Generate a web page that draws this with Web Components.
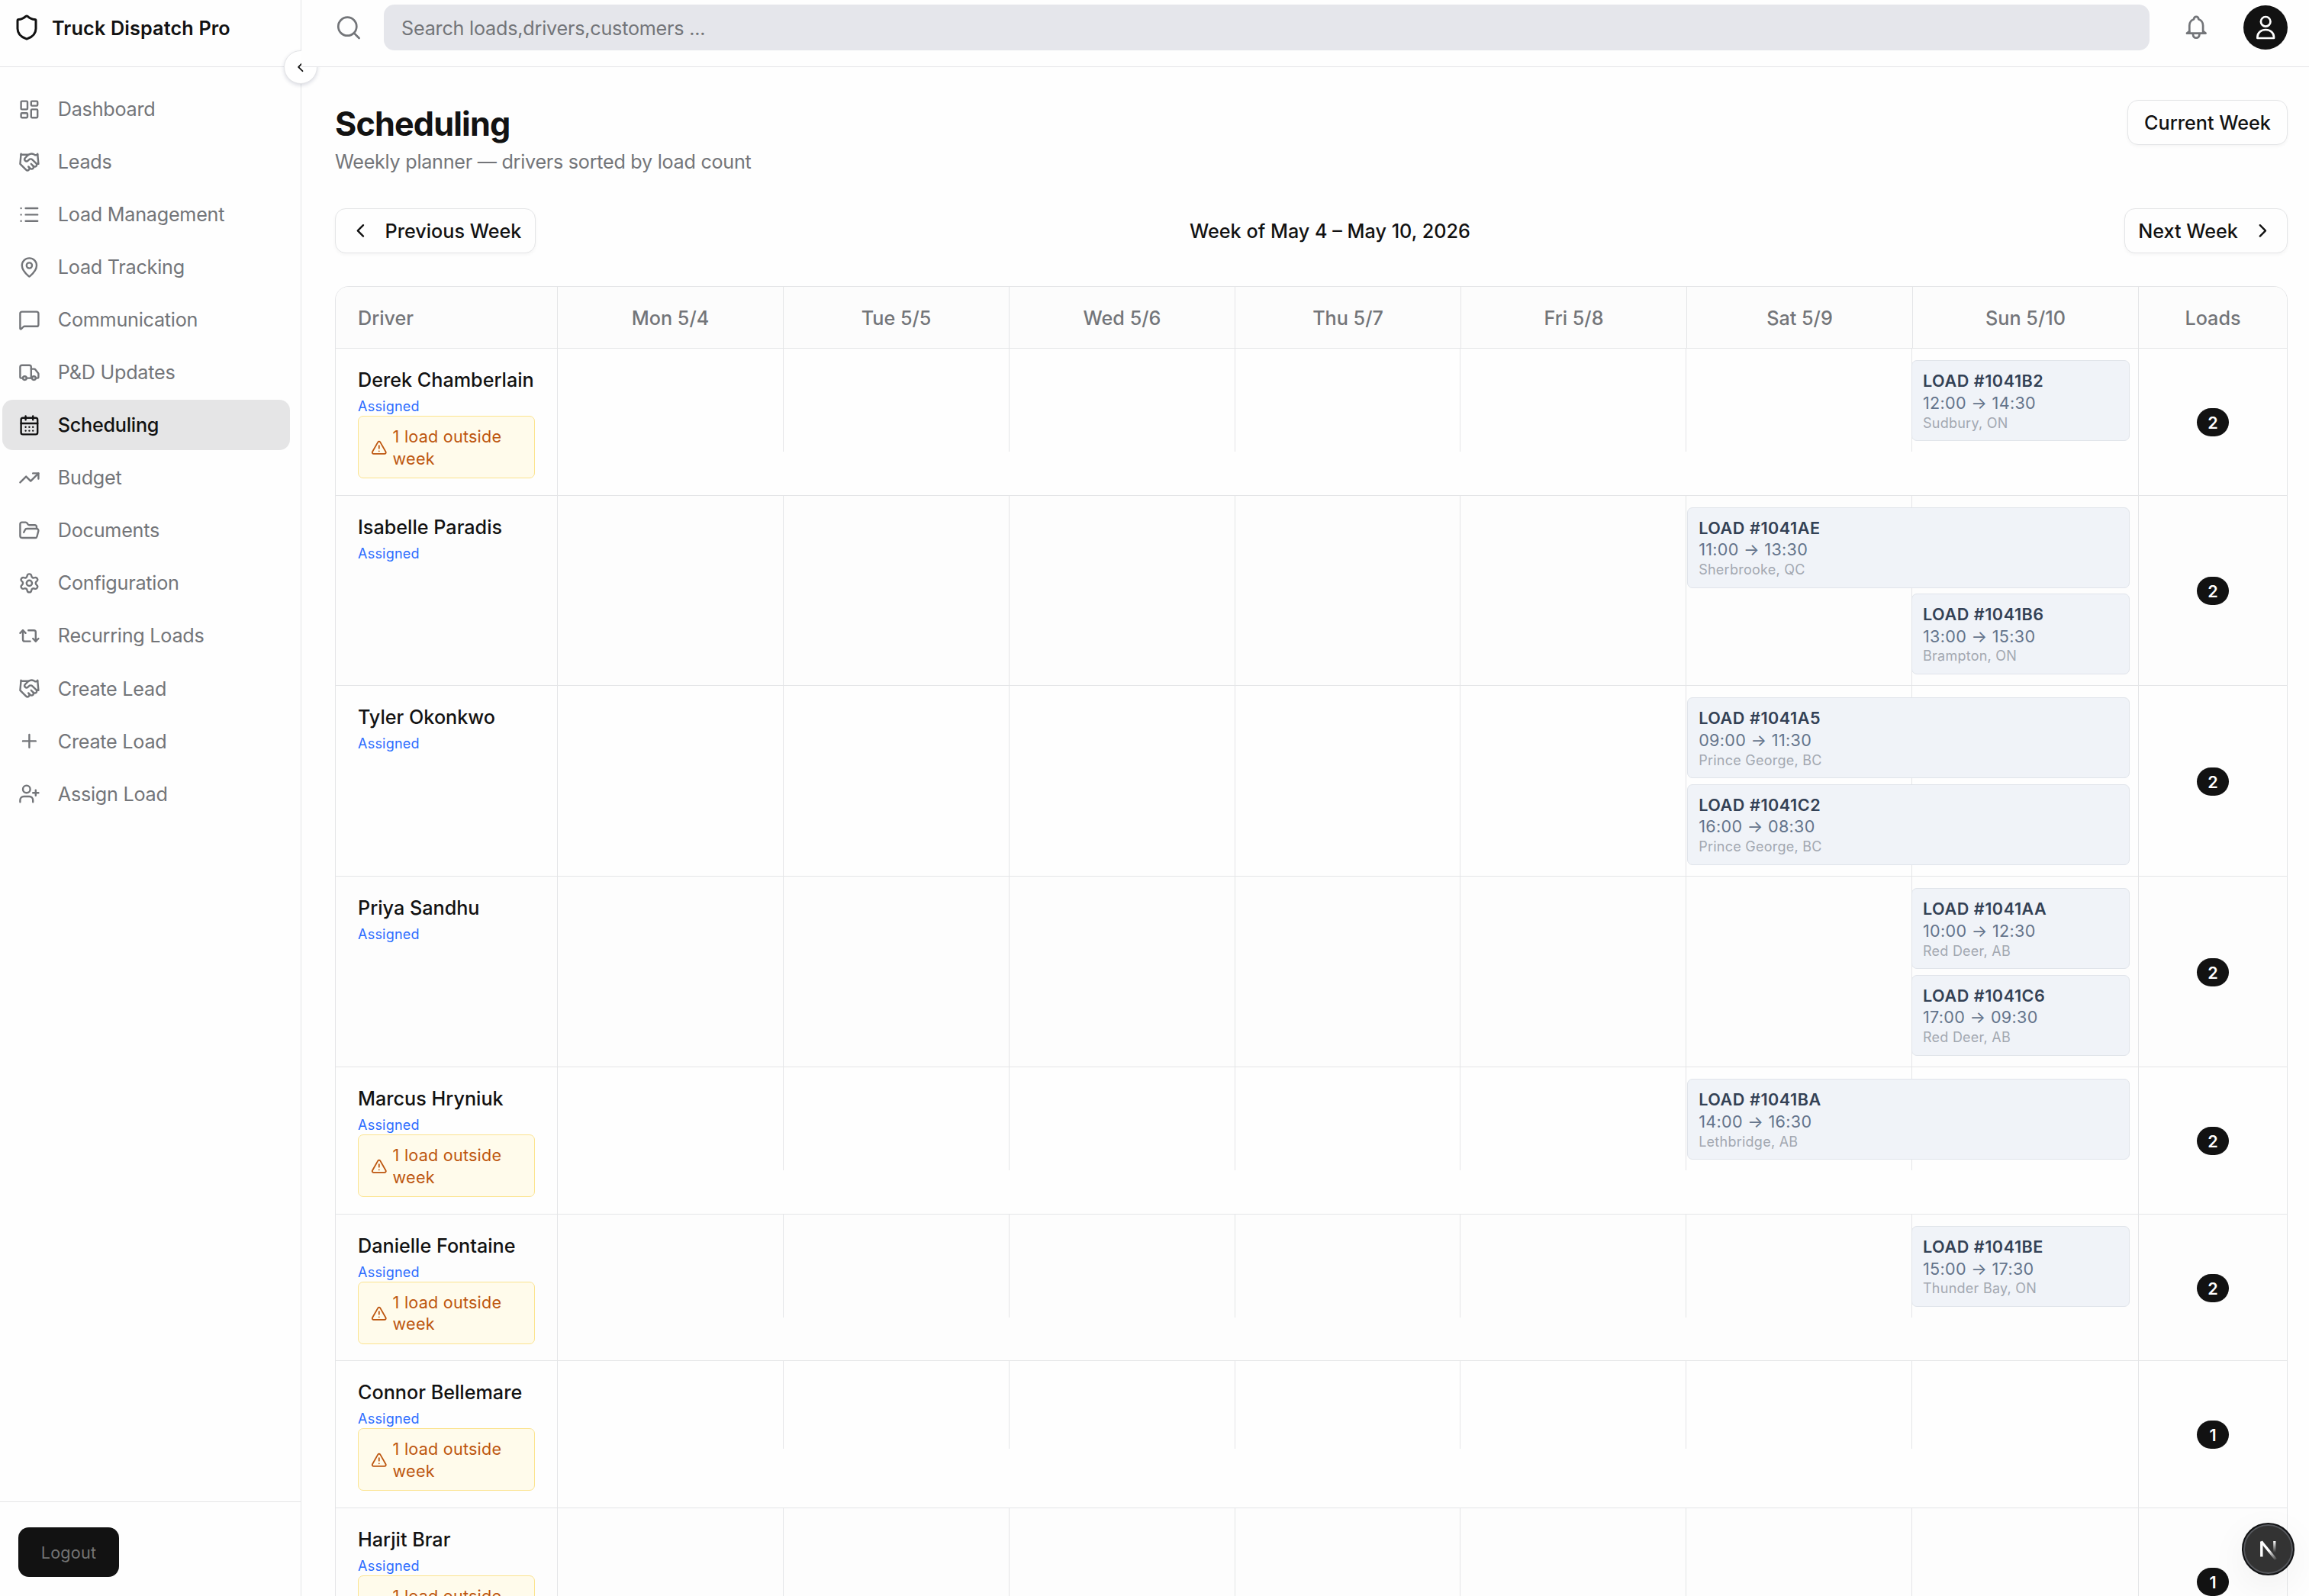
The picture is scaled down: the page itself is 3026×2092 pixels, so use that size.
<!DOCTYPE html>
<html lang="en">
<head>
<meta charset="utf-8">
<title>Truck Dispatch Pro</title>
<style>
  :root {
    --background: #fefefe;
    --foreground: #121212;
    --muted: #737579;
    --border: #e4e5e7;
    --accent: #e5e5e6;
  }

  body {
    margin: 0;
    width: 3026px;
    height: 2092px;
    overflow: hidden;
    background: var(--background);
    color: var(--foreground);
    font-family: Inter, "Liberation Sans", sans-serif;
    font-size: 25.2px;
    line-height: 36px;
  }
</style>
</head>
<body>
<dispatch-app></dispatch-app>

<script>
const ICONS = {
  shield: '<path d="M20 13c0 5-3.5 7.5-7.66 8.95a1 1 0 0 1-.67-.01C7.5 20.5 4 18 4 13V6a1 1 0 0 1 1-1c2 0 4.5-1.2 6.24-2.72a1.17 1.17 0 0 1 1.52 0C14.51 3.81 17 5 19 5a1 1 0 0 1 1 1z"/>',
  dashboard: '<rect width="7" height="9" x="3" y="3" rx="1"/><rect width="7" height="5" x="14" y="3" rx="1"/><rect width="7" height="9" x="14" y="12" rx="1"/><rect width="7" height="5" x="3" y="16" rx="1"/>',
  handshake: '<path d="m11 17 2 2a1 1 0 1 0 3-3"/><path d="m14 14 2.5 2.5a1 1 0 1 0 3-3l-3.88-3.88a3 3 0 0 0-4.24 0l-.88.88a1 1 0 1 1-3-3l2.81-2.81a5.79 5.79 0 0 1 7.06-.87l.47.28a2 2 0 0 0 1.42.25L21 4"/><path d="m21 3 1 11h-2"/><path d="M3 3 2 14l6.5 6.5a1 1 0 1 0 3-3"/><path d="M3 4h8"/>',
  list: '<path d="M3 5h.01M3 12h.01M3 19h.01M8 5h13M8 12h13M8 19h13"/>',
  pin: '<path d="M20 10c0 4.993-5.539 10.193-7.399 11.799a1 1 0 0 1-1.202 0C9.539 20.193 4 14.993 4 10a8 8 0 0 1 16 0"/><circle cx="12" cy="10" r="3"/>',
  message: '<path d="M22 17a2 2 0 0 1-2 2H6.828a2 2 0 0 0-1.414.586l-2.202 2.202A.71.71 0 0 1 2 21.286V5a2 2 0 0 1 2-2h16a2 2 0 0 1 2 2z"/>',
  truck: '<path d="M14 18V6a2 2 0 0 0-2-2H4a2 2 0 0 0-2 2v11a1 1 0 0 0 1 1h2"/><path d="M15 18H9"/><path d="M19 18h2a1 1 0 0 0 1-1v-3.65a1 1 0 0 0-.22-.624l-3.48-4.35A1 1 0 0 0 17.52 8H14"/><circle cx="17" cy="18" r="2"/><circle cx="7" cy="18" r="2"/>',
  calendar: '<path d="M8 2v4M16 2v4"/><rect width="18" height="18" x="3" y="4" rx="2"/><path d="M3 10h18M8 14h.01M12 14h.01M16 14h.01M8 18h.01M12 18h.01M16 18h.01"/>',
  trend: '<path d="M16 7h6v6"/><path d="m22 7-8.5 8.5-5-5L2 17"/>',
  folder: '<path d="m6 14 1.5-2.9A2 2 0 0 1 9.24 10H20a2 2 0 0 1 1.94 2.5l-1.54 6a2 2 0 0 1-1.95 1.5H4a2 2 0 0 1-2-2V5a2 2 0 0 1 2-2h3.9a2 2 0 0 1 1.69.9l.81 1.2a2 2 0 0 0 1.67.9H18a2 2 0 0 1 2 2v2"/>',
  settings: '<path d="M9.671 4.136a2.34 2.34 0 0 1 4.659 0 2.34 2.34 0 0 0 3.319 1.915 2.34 2.34 0 0 1 2.33 4.033 2.34 2.34 0 0 0 0 3.831 2.34 2.34 0 0 1-2.33 4.033 2.34 2.34 0 0 0-3.319 1.915 2.34 2.34 0 0 1-4.659 0 2.34 2.34 0 0 0-3.32-1.915 2.34 2.34 0 0 1-2.33-4.033 2.34 2.34 0 0 0 0-3.831A2.34 2.34 0 0 1 6.35 6.051a2.34 2.34 0 0 0 3.319-1.915"/><circle cx="12" cy="12" r="3"/>',
  repeat: '<path d="m2 9 3-3 3 3"/><path d="M13 18H7a2 2 0 0 1-2-2V6"/><path d="m22 15-3 3-3-3"/><path d="M11 6h6a2 2 0 0 1 2 2v10"/>',
  plus: '<path d="M5 12h14M12 5v14"/>',
  userplus: '<path d="M16 21v-2a4 4 0 0 0-4-4H6a4 4 0 0 0-4 4v2"/><circle cx="9" cy="7" r="4"/><path d="M19 8v6M22 11h-6"/>',
  left: '<path d="m15 18-6-6 6-6"/>',
  right: '<path d="m9 18 6-6-6-6"/>',
  warning: '<path d="m21.73 18-8-14a2 2 0 0 0-3.48 0l-8 14A2 2 0 0 0 4 21h16a2 2 0 0 0 1.73-3"/><path d="M12 9v4M12 17h.01"/>'
};

// Top bar icons are drawn on a 36 unit grid
const BAR_ICONS = {
  search: '<circle cx="16.3" cy="16.7" r="12"/><path d="m25 25.4 6.6 6.6"/>',
  bell: '<path d="M9.3 25V15.6c0-4.3 2.2-7.3 5.8-8.4.2-2.3 1.3-3.3 3.1-3.3s2.9 1 3.1 3.3c3.6 1.1 5.8 4.1 5.8 8.4V25"/><path d="M6 25.6h24.6l-3.2-2.4M6 25.6l3.2-2.4"/><path d="M13.9 26.8c.3 3.2 1.9 4.9 4.3 4.9s4-1.7 4.3-4.9"/>',
  user: '<circle cx="18.2" cy="10.3" r="6.3"/><path d="M7.4 32v-1.4C7.4 25 12 21 18.2 21S29 25 29 30.6V32z"/>'
};

class AppIcon extends HTMLElement {
  connectedCallback() {
    const name = this.getAttribute('name');
    const size = this.getAttribute('size') || 28.8;
    const bar = name in BAR_ICONS;
    this.attachShadow({ mode: 'open' }).innerHTML = `
      <style>
        :host { display: block; flex: none; width: ${size}px; height: ${size}px; }
        svg { display: block; fill: none; stroke: currentColor; stroke-linecap: round; stroke-linejoin: round; }
      </style>
      <svg width="${size}" height="${size}" viewBox="0 0 ${bar ? '36 36' : '24 24'}" stroke-width="${bar ? 2.7 : 2}">${bar ? BAR_ICONS[name] : ICONS[name]}</svg>
    `;
  }
}

class NavItem extends HTMLElement {
  connectedCallback() {
    this.attachShadow({ mode: 'open' }).innerHTML = `
      <style>
        :host {
          display: flex;
          align-items: center;
          box-sizing: border-box;
          height: 66px;
          padding-left: 21px;
          gap: 23px;
          border-radius: 14px;
          color: var(--muted);
          letter-spacing: -0.01em;
        }
        :host([active]) {
          background: var(--accent);
          color: var(--foreground);
          font-weight: 500;
        }
      </style>
      <app-icon name="${this.getAttribute('icon')}"></app-icon>
      <span><slot></slot></span>
    `;
  }
}

class SideNav extends HTMLElement {
  connectedCallback() {
    const items = [
      ['dashboard', 'Dashboard'],
      ['handshake', 'Leads'],
      ['list', 'Load Management'],
      ['pin', 'Load Tracking'],
      ['message', 'Communication'],
      ['truck', 'P&amp;D Updates'],
      ['calendar', 'Scheduling'],
      ['trend', 'Budget'],
      ['folder', 'Documents'],
      ['settings', 'Configuration'],
      ['repeat', 'Recurring Loads'],
      ['handshake', 'Create Lead'],
      ['plus', 'Create Load'],
      ['userplus', 'Assign Load']
    ];
    this.attachShadow({ mode: 'open' }).innerHTML = `
      <style>
        :host {
          display: flex;
          flex-direction: column;
          flex: none;
          position: relative;
          box-sizing: border-box;
          width: 395px;
          height: 2092px;
          border-right: 1px solid var(--border);
        }
        .brand {
          display: flex;
          align-items: center;
          box-sizing: border-box;
          height: 88px;
          padding: 0 0 15px 17px;
          gap: 15px;
          border-bottom: 1px solid var(--border);
          font-weight: 600;
          letter-spacing: 0.006em;
        }
        .brand span { padding-top: 1px; }
        nav {
          flex: 1;
          display: flex;
          flex-direction: column;
          gap: 3.06px;
          padding: 22px 14px 0 3px;
        }
        footer {
          box-sizing: border-box;
          height: 124px;
          padding: 33px 24px;
          border-top: 1px solid var(--border);
        }
        .logout {
          width: 132px;
          height: 65px;
          border: 0;
          border-radius: 14px;
          background: var(--foreground);
          color: #747474;
          font: inherit;
          font-size: 21.6px;
          letter-spacing: 0.01em;
        }
        /* Collapse handle sits on the sidebar edge */
        .collapse {
          position: absolute;
          top: 66px;
          right: -22px;
          display: grid;
          place-items: center;
          box-sizing: border-box;
          width: 44px;
          height: 44px;
          border: 1px solid var(--border);
          border-radius: 50%;
          background: #fff;
          box-shadow: 0 2px 5px rgb(30 40 80 / 0.16);
        }
      </style>
      <div class="brand"><app-icon name="shield" size="36"></app-icon><span>Truck Dispatch Pro</span></div>
      <nav>${items.map(([icon, label]) => `<nav-item icon="${icon}" ${label === 'Scheduling' ? 'active' : ''}>${label}</nav-item>`).join('')}</nav>
      <footer><button class="logout">Logout</button></footer>
      <div class="collapse"><app-icon name="left" size="21.6"></app-icon></div>
    `;
  }
}

class TopBar extends HTMLElement {
  connectedCallback() {
    this.attachShadow({ mode: 'open' }).innerHTML = `
      <style>
        :host {
          display: flex;
          align-items: center;
          position: relative;
          z-index: 1;
          box-sizing: border-box;
          height: 88px;
          padding: 0 28px 15px 44px;
          border-bottom: 1px solid var(--border);
          background: var(--background);
          color: var(--muted);
        }
        .search {
          flex: 1;
          box-sizing: border-box;
          height: 60px;
          margin: 0 43px 0 28px;
          padding: 13px 23px 0;
          border-radius: 14px;
          background: #e5e6eb;
          letter-spacing: -0.009em;
        }
        .avatar {
          display: grid;
          place-items: center;
          width: 58px;
          height: 58px;
          margin-left: 44px;
          border-radius: 50%;
          background: var(--foreground);
          color: #fff;
        }
      </style>
      <app-icon name="search" size="36"></app-icon>
      <div class="search">Search loads,drivers,customers ...</div>
      <app-icon name="bell" size="36"></app-icon>
      <div class="avatar"><app-icon name="user" size="36"></app-icon></div>
    `;
  }
}

class OutlineButton extends HTMLElement {
  connectedCallback() {
    this.attachShadow({ mode: 'open' }).innerHTML = `
      <style>
        :host {
          display: flex;
          align-items: center;
          justify-content: center;
          gap: 18px;
          box-sizing: border-box;
          height: 59px;
          padding: 0 18px;
          border: 1px solid var(--border);
          border-radius: 14px;
          background: #fefefe;
          font-weight: 500;
          white-space: nowrap;
          box-shadow: 0 2px 4px rgb(0 0 0 / 0.04);
        }
      </style>
      <slot></slot>
    `;
  }
}

class LoadCard extends HTMLElement {
  connectedCallback() {
    const start = this.getAttribute('day') === 'sat' ? 6 : 7;
    this.attachShadow({ mode: 'open' }).innerHTML = `
      <style>
        :host {
          display: block;
          box-sizing: border-box;
          grid-column: ${start} / 8;
          height: 106px;
          padding: 12px 14.4px 0;
          border: 1px solid #e0e4ea;
          border-radius: 7px;
          background: #f0f3f8;
          font-size: 21.6px;
          line-height: 28.8px;
        }
        .number { color: #334155; font-weight: 600; letter-spacing: 0.025em; }
        .time { color: #64748b; letter-spacing: 0.014em; }
        .city { color: #a3a8b1; font-size: 18px; line-height: 24.5px; letter-spacing: 0.014em; }
      </style>
      <div class="number">LOAD #${this.getAttribute('number')}</div>
      <div class="time">${this.getAttribute('time').replace('-', ' → ')}</div>
      <div class="city"><slot></slot></div>
    `;
  }
}

class DriverRow extends HTMLElement {
  connectedCallback() {
    const outside = this.hasAttribute('outside');
    const cards = this.querySelectorAll('load-card').length;
    this.attachShadow({ mode: 'open' }).innerHTML = `
      <style>
        :host {
          display: grid;
          grid-template-columns: 291px 2072px 194px;
          box-sizing: border-box;
          height: ${outside ? 192.6 : 249.9}px;
          border-bottom: 1px solid var(--border);
        }
        :host(:nth-child(even)) { background: #fdfdfd; }
        .driver { padding: 23px 29px 0; border-right: 1px solid var(--border); }
        .name { font-weight: 500; white-space: nowrap; }
        .status {
          margin-top: 4px;
          color: #2b6cff;
          font-size: 18px;
          line-height: 26px;
          letter-spacing: 0.013em;
        }
        .outside {
          display: flex;
          align-items: center;
          gap: 7px;
          box-sizing: border-box;
          height: 82px;
          margin-top: -1px;
          padding: 1px 0 0 16px;
          border: 1px solid #fbe38e;
          border-radius: 7px;
          background: #fffbeb;
          color: #bd560f;
          font-size: 21.6px;
          line-height: 28.8px;
          letter-spacing: 0.01em;
        }
        .week {
          display: grid;
          border-right: 1px solid var(--border);
        }
        .lines, .cards { grid-area: 1 / 1; display: grid; grid-template-columns: repeat(7, 1fr); }
        .lines { height: ${outside ? (cards ? '135px' : '115px') : '100%'}; }
        .lines i { border-right: 1px solid var(--border); }
        .lines i:last-child { border: 0; }
        .cards { align-content: start; gap: 7.2px; padding: 15px 10.8px; }
        .count { display: grid; place-items: center; padding-top: 1px; }
        .pill {
          width: 42px;
          height: 37px;
          border-radius: 19px;
          background: var(--foreground);
          color: #fff;
          font-size: 21.6px;
          font-weight: 600;
          line-height: 38px;
          text-align: center;
        }
      </style>
      <div class="driver">
        <div class="name">${this.getAttribute('name')}</div>
        <div class="status">Assigned</div>
        ${outside ? '<div class="outside"><app-icon name="warning" size="21.6"></app-icon><span>1 load outside<br>week</span></div>' : ''}
      </div>
      <div class="week">
        <div class="lines">${'<i></i>'.repeat(7)}</div>
        <div class="cards"><slot></slot></div>
      </div>
      <div class="count"><span class="pill">${this.getAttribute('loads')}</span></div>
    `;
  }
}

class WeekPlanner extends HTMLElement {
  connectedCallback() {
    const days = ['Mon 5/4', 'Tue 5/5', 'Wed 5/6', 'Thu 5/7', 'Fri 5/8', 'Sat 5/9', 'Sun 5/10'];
    this.attachShadow({ mode: 'open' }).innerHTML = `
      <style>
        :host {
          display: block;
          flex: none;
          box-sizing: border-box;
          width: 2559px;
          height: 2000px;
          border: 1px solid var(--border);
          border-radius: 18px;
          overflow: hidden;
        }
        .head {
          display: grid;
          grid-template-columns: 291px repeat(7, 296px) 194px;
          box-sizing: border-box;
          height: 81px;
          border-bottom: 1px solid var(--border);
          background: #fcfcfc;
          color: var(--muted);
          font-weight: 500;
          line-height: 82px;
          text-align: center;
        }
        .head span { height: 80px; box-sizing: border-box; border-right: 1px solid var(--border); }
        .head span:first-child { padding-left: 29px; text-align: left; }
        .head span:last-child { border: 0; }
      </style>
      <div class="head">
        <span>Driver</span>${days.map(day => `<span>${day}</span>`).join('')}<span>Loads</span>
      </div>
      <div class="rows">
        <driver-row name="Derek Chamberlain" loads="2" outside>
          <load-card day="sun" number="1041B2" time="12:00-14:30">Sudbury, ON</load-card>
        </driver-row><driver-row name="Isabelle Paradis" loads="2">
          <load-card day="sat" number="1041AE" time="11:00-13:30">Sherbrooke, QC</load-card>
          <load-card day="sun" number="1041B6" time="13:00-15:30">Brampton, ON</load-card>
        </driver-row><driver-row name="Tyler Okonkwo" loads="2">
          <load-card day="sat" number="1041A5" time="09:00-11:30">Prince George, BC</load-card>
          <load-card day="sat" number="1041C2" time="16:00-08:30">Prince George, BC</load-card>
        </driver-row><driver-row name="Priya Sandhu" loads="2">
          <load-card day="sun" number="1041AA" time="10:00-12:30">Red Deer, AB</load-card>
          <load-card day="sun" number="1041C6" time="17:00-09:30">Red Deer, AB</load-card>
        </driver-row><driver-row name="Marcus Hryniuk" loads="2" outside>
          <load-card day="sat" number="1041BA" time="14:00-16:30">Lethbridge, AB</load-card>
        </driver-row><driver-row name="Danielle Fontaine" loads="2" outside>
          <load-card day="sun" number="1041BE" time="15:00-17:30">Thunder Bay, ON</load-card>
        </driver-row><driver-row name="Connor Bellemare" loads="1" outside></driver-row>
        <driver-row name="Harjit Brar" loads="1" outside></driver-row>
      </div>
    `;
  }
}

class DevBadge extends HTMLElement {
  connectedCallback() {
    this.attachShadow({ mode: 'open' }).innerHTML = `
      <style>
        :host {
          position: absolute;
          left: 2938px;
          top: 1996px;
          z-index: 2;
          display: block;
          box-sizing: border-box;
          width: 69px;
          height: 69px;
          border: 2px solid #111214;
          border-radius: 50%;
          background: #333;
          box-shadow: inset 0 0 0 2px #56585d, 0 14px 50px rgb(0 0 0 / 0.06);
        }
        svg { display: block; margin: 20px 0 0 20px; }
      </style>
      <svg width="28" height="28" viewBox="0 0 28 28" fill="none">
        <defs>
          <linearGradient id="slant" gradientUnits="userSpaceOnUse" x1="14" y1="14" x2="24" y2="27">
            <stop stop-color="#fff"/><stop offset="1" stop-color="#fff" stop-opacity="0"/>
          </linearGradient>
          <linearGradient id="bar" gradientUnits="userSpaceOnUse" x1="20" y1="2" x2="20" y2="17">
            <stop stop-color="#fff"/><stop offset="1" stop-color="#fff" stop-opacity="0"/>
          </linearGradient>
        </defs>
        <path d="M3.8 22.5V2.5" stroke="#fff" stroke-width="3.4"/>
        <path d="M3.4 2.5 22.5 26" stroke="url(#slant)" stroke-width="3.4"/>
        <path d="M20.8 2v15" stroke="url(#bar)" stroke-width="3.2"/>
      </svg>
    `;
  }
}

class DispatchApp extends HTMLElement {
  connectedCallback() {
    this.attachShadow({ mode: 'open' }).innerHTML = `
      <style>
        :host { display: flex; position: relative; width: 3026px; height: 2092px; overflow: hidden; }
        .content { flex: 1; min-width: 0; display: flex; flex-direction: column; }
        main { flex: 1; min-height: 0; display: flex; flex-direction: column; padding: 43px 28px 0 44px; }
        .title, .weeks { flex: none; display: flex; justify-content: space-between; align-items: flex-start; }
        .title { height: 142px; }
        .weeks { height: 102px; font-weight: 500; }
        .label { line-height: 60px; }
        h1 { margin: 4px 0 5px; font-size: 43.2px; line-height: 54px; font-weight: 700; letter-spacing: -0.02em; }
        p { margin: 0; color: var(--muted); letter-spacing: -0.011em; }
      </style>
      <side-nav></side-nav>
      <div class="content">
        <top-bar></top-bar>
        <main>
          <div class="title">
            <div><h1>Scheduling</h1><p>Weekly planner — drivers sorted by load count</p></div>
            <outline-button style="width: 210px">Current Week</outline-button>
          </div>
          <div class="weeks">
            <outline-button style="width: 263px"><app-icon name="left"></app-icon><span>Previous Week</span></outline-button>
            <span class="label">Week of May 4 – May 10, 2026</span>
            <outline-button style="width: 214px"><span>Next Week</span><app-icon name="right"></app-icon></outline-button>
          </div>
          <week-planner></week-planner>
        </main>
      </div>
      <dev-badge></dev-badge>
    `;
  }
}

customElements.define('app-icon', AppIcon);
customElements.define('nav-item', NavItem);
customElements.define('side-nav', SideNav);
customElements.define('top-bar', TopBar);
customElements.define('outline-button', OutlineButton);
customElements.define('load-card', LoadCard);
customElements.define('driver-row', DriverRow);
customElements.define('week-planner', WeekPlanner);
customElements.define('dev-badge', DevBadge);
customElements.define('dispatch-app', DispatchApp);
</script>
</body>
</html>
